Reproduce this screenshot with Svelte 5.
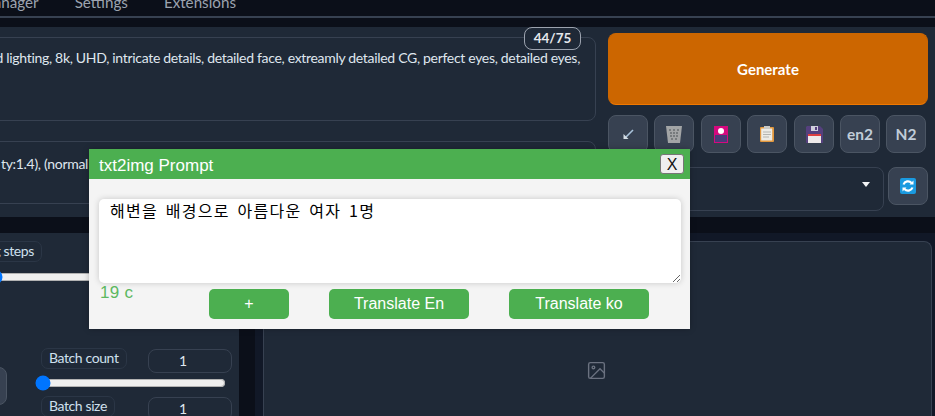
<script>
  const tabs = ['Image Browser Manager', 'Settings', 'Extensions'];
  const tools = ['en2', 'N2'];
  let promptText = $state('해변을 배경으로 아름다운 여자 1명');
  let count = $derived(promptText.length);
</script>

<div class="page">
  <nav class="tabs">
    {#each tabs as tab}
      <span>{tab}</span>
    {/each}
  </nav>

  <section class="top">
    <div class="prompts">
      <div class="prompt first">
        <span class="counter">44/75</span>
        <p>d lighting, 8k, UHD, intricate details, detailed face, extreamly detailed CG, perfect eyes, detailed eyes,</p>
      </div>
      <div class="prompt second">
        <p>ty:1.4), (normal</p>
      </div>
    </div>

    <div class="actions">
      <button class="generate">Generate</button>
      <div class="tools">
        <button class="tool" aria-label="read">
          <svg width="14" height="14" viewBox="0 0 14 14"><path d="M12 3 5 10" stroke="#a9c3da" stroke-width="1.600" fill="none" /><path d="M2.500 7v5h5z" fill="#d5dde4" /></svg>
        </button>
        <button class="tool" aria-label="clear">
          <svg width="16" height="18" viewBox="0 0 16 18">
            <path d="M0 1h16l-2 17H2z" fill="#a3a5a6" />
            <path d="M3 5h2M7 5h2M11 5h2M4 8h2M7 8h2M10 8h2M4 11h2M7 11h2M10 11h2M5 14h2M9 14h2" stroke="#6a6d70" stroke-width="1.500" />
          </svg>
        </button>
        <button class="tool" aria-label="style">
          <svg width="14" height="17" viewBox="0 0 14 17">
            <rect width="14" height="17" fill="#d6097f" />
            <rect x="1" y="9" width="12" height="7" fill="#4a3a78" />
            <circle cx="7" cy="5" r="3" fill="#fff" />
          </svg>
        </button>
        <button class="tool" aria-label="paste">
          <svg width="14" height="16" viewBox="0 0 14 16">
            <rect y="1" width="14" height="15" rx="1" fill="#e2983e" />
            <rect x="1.200" y="2.500" width="11" height="12" fill="#ecebe6" />
            <path d="M3 6h8M3 8.500h8M3 11h6" stroke="#b4b4b0" />
            <rect x="4" width="6" height="3" fill="#c9c9c6" />
          </svg>
        </button>
        <button class="tool" aria-label="save">
          <svg width="17" height="17" viewBox="0 0 17 17">
            <path d="M1 0h13l3 3v14H0V1z" fill="#55407e" />
            <rect x="5" y="0" width="7" height="5" fill="#cfcfdc" />
            <rect x="9" y="1" width="2" height="3" fill="#55407e" />
            <rect x="2" y="8" width="13" height="9" fill="#eeeaea" />
            <rect x="2" y="8" width="13" height="2" fill="#dd4040" />
          </svg>
        </button>
        {#each tools as label}
          <button class="tool text">{label}</button>
        {/each}
      </div>
      <div class="style-row">
        <div class="select"><i class="caret"></i></div>
        <button class="tool refresh" aria-label="refresh">
          <svg width="16" height="16" viewBox="0 0 16 16">
            <rect width="16" height="16" rx="2" fill="#1a9ae0" />
            <path d="M3.500 6.500A4.700 4.700 0 0 1 11.500 5M12.500 9.500A4.700 4.700 0 0 1 4.500 11" stroke="#fff" stroke-width="2.200" fill="none" />
            <path d="M9.500 6.500h4v-4zM6.500 9.500h-4v4z" fill="#fff" />
          </svg>
        </button>
      </div>
    </div>
  </section>

  <section class="bottom">
    <div class="settings">
      <span class="label steps">Sampling steps</span>
      <input class="steps-range" type="range" min="1" max="150" value="2" />

      <div class="batch-row">
        <div class="side-button"></div>
        <div class="batch">
          <div class="batch-head">
            <span class="label">Batch count</span>
            <span class="number">1</span>
          </div>
          <input type="range" min="1" max="100" value="1" />
          <div class="batch-head">
            <span class="label">Batch size</span>
            <span class="number">1</span>
          </div>
        </div>
      </div>
    </div>

    <div class="output-wrap">
      <div class="output">
        <svg width="21" height="21" viewBox="0 0 24 24" fill="none" stroke="#6b7280" stroke-width="1.600">
          <rect x="3" y="3" width="18" height="18" rx="2" />
          <circle cx="8.500" cy="8.500" r="1.500" />
          <polyline points="21 15 16 10 5 21" />
        </svg>
      </div>
    </div>
  </section>

  <div class="modal">
    <header>
      <span class="title">txt2img Prompt</span>
      <button class="close">X</button>
    </header>
    <div class="modal-body">
      <textarea bind:value={promptText}></textarea>
      <div class="modal-foot">
        <span class="chars">{count} c</span>
        <button class="green plus">+</button>
        <button class="green wide">Translate En</button>
        <button class="green wide">Translate ko</button>
      </div>
    </div>
  </div>
</div>

<style>
  :global(body) {
    background: #0b0f19;
  }
  .page {
    position: relative;
    width: 935px;
    height: 416px;
    overflow: hidden;
    background: #0b0f19;
    font-family: "Lato", "Noto Sans", sans-serif;
    color: #d1d9e2;
  }
  .tabs {
    box-sizing: border-box;
    width: 935px;
    height: 18px;
    padding-right: 699px;
    border-bottom: 2px solid #374151;
    display: flex;
    justify-content: flex-end;
    gap: 36px;
    color: #9ca3af;
    font-size: 15.200px;
    line-height: 20px;
    white-space: nowrap;
  }
  .tabs span {
    margin-top: -8px;
  }
  .top {
    margin-top: 9px;
    height: 190px;
    box-sizing: border-box;
    padding: 6px 0 0;
    background: #1f2937;
    display: flex;
    gap: 12px;
  }
  .prompts {
    width: 596px;
    flex: none;
    display: flex;
    flex-direction: column;
    gap: 20px;
    padding-top: 4px;
  }
  .prompt {
    position: relative;
    box-sizing: border-box;
    margin-left: -20px;
    border: 1px solid #374151;
    border-radius: 8px;
    display: flex;
    justify-content: flex-end;
    padding-right: 15px;
  }
  .prompt p {
    margin: 0;
    font-size: 14px;
    line-height: 20px;
    letter-spacing: -0.310px;
    white-space: nowrap;
    color: #dfe6ee;
  }
  .first {
    height: 84px;
    padding-top: 10px;
  }
  .second {
    height: 63px;
    padding-top: 12px;
    justify-content: flex-start;
  }
  .second p {
    margin-left: 20px;
  }
  .counter {
    position: absolute;
    top: -11px;
    right: 14px;
    box-sizing: border-box;
    width: 57px;
    height: 23px;
    line-height: 21px;
    text-align: center;
    border: 1px solid #9ca3af;
    border-radius: 8px;
    background: #1f2937;
    font-size: 13.500px;
    font-weight: 700;
    color: #e5e7eb;
  }
  .actions {
    width: 320px;
    flex: none;
    display: flex;
    flex-direction: column;
  }
  button {
    font-family: inherit;
  }
  .generate {
    height: 72px;
    border: 1px solid #cc6600;
    border-bottom-color: #f07800;
    border-radius: 8px;
    background: #cc6600;
    color: #fff;
    font-size: 15px;
    font-weight: 700;
  }
  .tools {
    display: flex;
    margin-top: 10px;
    gap: 6px;
  }
  .tools .tool:nth-child(3),
  .tools .tool:nth-child(5) {
    margin-left: 1px;
  }
  .tool {
    box-sizing: border-box;
    flex: none;
    width: 40px;
    height: 38px;
    padding: 0;
    display: flex;
    align-items: center;
    justify-content: center;
    background: #374151;
    border: 1px solid #4b5563;
    border-radius: 8px;
  }
  .text {
    color: #c0ccd8;
    font-size: 15.500px;
    font-weight: 700;
  }
  .style-row {
    display: flex;
    align-items: flex-start;
    gap: 4px;
    margin-top: 14px;
  }
  .select {
    position: relative;
    box-sizing: border-box;
    width: 276px;
    height: 44px;
    border: 1px solid #374151;
    border-radius: 8px;
  }
  .caret {
    position: absolute;
    top: 14px;
    right: 13px;
    border-left: 4px solid transparent;
    border-right: 4px solid transparent;
    border-top: 5px solid #f3f4f6;
  }
  .bottom {
    margin-top: 16px;
    display: flex;
    height: 183px;
  }
  .settings {
    box-sizing: border-box;
    width: 239px;
    flex: none;
    background: #1f2937;
    padding-top: 9px;
    overflow: hidden;
  }
  .label {
    display: block;
    width: fit-content;
    box-sizing: border-box;
    height: 21px;
    margin-top: -1px;
    line-height: 17px;
    padding: 0 7px;
    border: 1px solid #2b3646;
    border-radius: 7px;
    font-size: 14px;
    letter-spacing: -0.400px;
    white-space: nowrap;
    color: #cfe0ee;
  }
  .steps {
    margin-left: -60px;
  }
  input[type="range"] {
    display: block;
    margin: 0;
  }
  .steps-range {
    margin-top: 7px !important;
    margin-left: -15px !important;
    width: 300px;
  }
  .batch-row {
    display: flex;
    margin-top: 64px;
  }
  .side-button {
    box-sizing: border-box;
    width: 40px;
    height: 38px;
    margin: 18px 0 0 -33px;
    background: #374151;
    border: 1px solid #4b5563;
    border-radius: 8px;
    flex: none;
  }
  .batch {
    margin-left: 34px;
    width: 191px;
  }
  .batch-head {
    display: flex;
    justify-content: space-between;
    align-items: flex-start;
  }
  .batch input {
    width: 191px;
    margin: 2px 0 6px -6px;
  }
  .number {
    box-sizing: border-box;
    width: 84px;
    height: 24px;
    line-height: 22px;
    padding-left: 30px;
    border: 1px solid #374151;
    border-radius: 8px;
    font-size: 14px;
    color: #dfe6ee;
  }
  .output-wrap {
    flex: 1;
    margin-left: 16px;
    padding: 8px 3px 0 8px;
    background: #111827;
  }
  .output {
    box-sizing: border-box;
    height: 175px;
    background: #1f2937;
    border: 1px solid #374151;
    border-bottom: 0;
    border-radius: 8px 8px 0 0;
    display: flex;
    justify-content: center;
    padding: 118px 2px 0 0;
  }
  .modal {
    position: absolute;
    left: 89px;
    top: 149px;
    width: 601px;
    height: 180px;
    background: #f4f4f4;
    box-shadow: 0 0 6px rgba(0, 0, 0, 0.25);
    font-family: "Liberation Sans", Arial, sans-serif;
  }
  .modal header {
    box-sizing: border-box;
    height: 30px;
    padding: 0 6px 0 10px;
    background: #4caf50;
    color: #fff;
    font-size: 17px;
    display: flex;
    align-items: center;
    justify-content: space-between;
  }
  .title {
    padding-top: 3px;
  }
  .close {
    box-sizing: border-box;
    width: 24px;
    height: 20px;
    padding: 0;
    background: #efefef;
    border: 1px solid #767676;
    border-radius: 3px;
    color: #111;
    font-size: 16px;
    line-height: 17px;
  }
  .modal-body {
    padding: 20px 9px 0 10px;
  }
  textarea {
    display: block;
    box-sizing: border-box;
    width: 582px;
    height: 84px;
    padding: 1px 11px;
    border: 0;
    border-radius: 5px;
    background: #fff;
    box-shadow: 0 0 6px rgba(0, 0, 0, 0.18);
    outline: none;
    color: #000;
    font-family: "Noto Sans CJK KR", sans-serif;
    font-size: 16px;
    line-height: 20px;
    letter-spacing: 1.300px;
    word-spacing: 2.800px;
  }
  .modal-foot {
    position: relative;
    display: flex;
    margin-top: 6px;
    padding-left: 110px;
    gap: 40px;
  }
  .chars {
    position: absolute;
    left: 1px;
    top: -6px;
    color: #5cb860;
    font-size: 17px;
    letter-spacing: 0.300px;
  }
  .green {
    box-sizing: border-box;
    height: 30px;
    padding: 0;
    border: 0;
    border-radius: 5px;
    background: #4caf50;
    color: #fff;
    font-size: 16px;
  }
  .plus {
    width: 80px;
  }
  .wide {
    width: 140px;
  }
</style>
